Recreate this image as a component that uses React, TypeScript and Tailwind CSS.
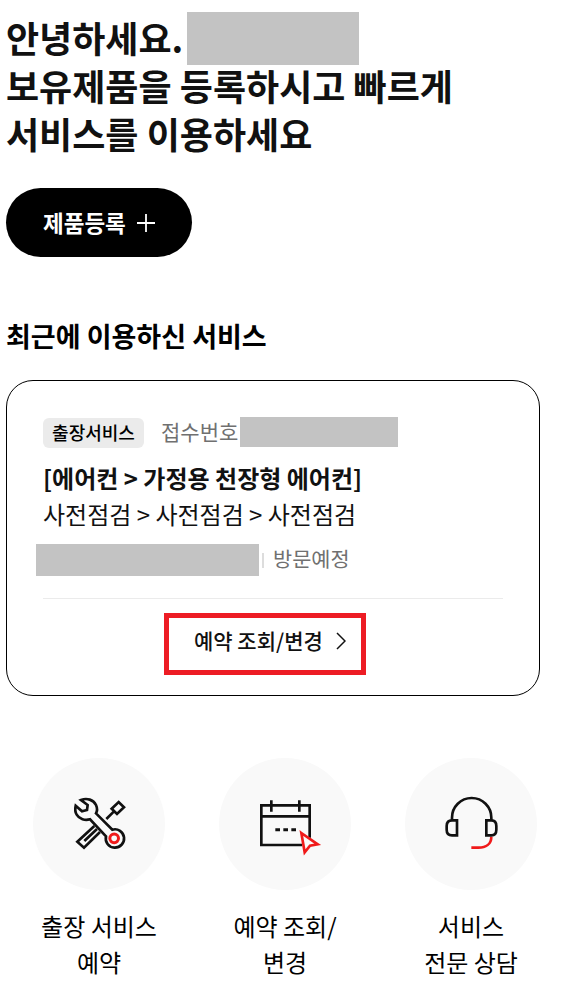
import type { ReactNode } from "react";

function ToolsIcon() {
  return (
    <svg viewBox="24 24 396 396" className="size-full" fill="none" stroke="#111" strokeWidth="8">
      <path d="M168 150 C186 143 205 149 213 165 C217 174 217 183 213 190 L262 239 A27.500 27.500 0 1 1 243 259 L195 208 C180 212 163 208 155 194 C150 186 150 176 152 167 L171 184 L186 180 L188 165 Z" />
      <circle cx="267.500" cy="265" r="13" stroke="#f01a1a" strokeWidth="9" />
      <path d="M208 228 L157 275 L177 293 L225 246 M178 273 L216 237 M244 207 L267 184 M260 176 L281 156 L297 172 L276 192 Z" />
    </svg>
  );
}

function CalendarIcon() {
  return (
    <svg viewBox="27 24 396 396" className="size-full" fill="none" stroke="#111" strokeWidth="8">
      <path d="M299 263 V166 H154 V285 H276 M154 199 H299 M184 151 V185 M268 151 V185" />
      <path d="M196 239 H210 M220 239 H234 M244 239 H258" strokeWidth="9" />
      <path d="M274 249 L323 283 L300 287 L284 307 Z" stroke="#f01a1a" strokeWidth="8" />
    </svg>
  );
}

function HeadsetIcon() {
  return (
    <svg viewBox="30 24 396 396" className="size-full" fill="none" stroke="#111" strokeWidth="8">
      <path d="M289 260 C289 283 272 293 250 293 H229" stroke="#f01a1a" strokeWidth="8" />
      <path d="M171 210 V203 A59 59 0 0 1 289 203 V210" />
      <path d="M186 211 H171 Q155 211 155 228 V239 Q155 256 171 256 H186 Z M274 211 H289 Q304 211 304 228 V239 Q304 256 289 256 H274 Z" />
    </svg>
  );
}

function Shortcut({ icon, lines }: { icon: ReactNode; lines: string[] }) {
  return (
    <a className="flex w-[186px] flex-col items-center">
      <span className="block size-[132px] rounded-full bg-[#f9f9f9]">{icon}</span>
      <span className="mt-[18px] text-center text-[24px] leading-[36px] text-black">
        {lines.map((line) => (
          <span key={line} className="block">{line}</span>
        ))}
      </span>
    </a>
  );
}

export default function App() {
  return (
    <main className="h-[1007px] w-[571px] overflow-hidden bg-white pl-[6px] font-['Noto_Sans_CJK_KR','Noto_Sans_KR',sans-serif] text-[#111]">
      <h1 className="pt-[12px] text-[36px] font-bold leading-[48px]">
        <span className="flex h-[49px] items-start">
          <span className="w-[181px] pt-[1px] whitespace-nowrap">안녕하세요.</span>
          <span className="h-[53px] w-[172px] shrink-0 bg-[#c3c3c3]" />
        </span>
        <span className="block">보유제품을 등록하시고 빠르게</span>
        <span className="block">서비스를 이용하세요</span>
      </h1>

      <button className="mt-[31px] flex h-[69px] w-[186px] items-center rounded-full bg-black pl-[37px] text-[22.5px] font-bold leading-[34px] text-white">
        <span className="pb-[2px]">제품등록</span>
        <svg viewBox="0 0 18 18" className="ml-[11px] size-[18px]" fill="none" stroke="white" strokeWidth="1.800">
          <path d="M9 0 V18 M0 9 H18" />
        </svg>
      </button>

      <h2 className="mt-[59px] text-[27px] font-bold leading-[40px] text-black">최근에 이용하신 서비스</h2>

      <section className="mt-[24px] h-[316px] w-[534px] rounded-[27px] border border-black">
        <div className="flex h-[67px] items-end pl-[36px]">
          <span className="flex h-[30px] w-[101px] items-center justify-center rounded-[6px] bg-[#ebebeb] pb-px text-[18px] font-medium text-black">
            출장서비스
          </span>
          <span className="mb-[2px] ml-[17px] w-[79px] text-[21px] leading-[30px] text-[#707070]">접수번호</span>
          <span className="mb-px h-[30px] w-[158px] bg-[#c3c3c3]" />
        </div>
        <p className="mt-[12px] pl-[36px] text-[24px] font-bold leading-[36px]">[에어컨 &gt; 가정용 천장형 에어컨]</p>
        <p className="pl-[36px] text-[24px] leading-[36px]">사전점검 &gt; 사전점검 &gt; 사전점검</p>
        <div className="mt-[12px] flex h-[32px] items-center pl-[29px]">
          <span className="h-[32px] w-[223px] bg-[#c3c3c3]" />
          <span className="ml-[3px] h-[15px] w-[2px] bg-[#ddd]" />
          <span className="ml-[9px] pb-[4px] text-[20.8px] leading-[28px] text-[#707070]">방문예정</span>
        </div>
        <div className="mx-[36px] mt-[22px] h-px bg-[#ebebeb]" />
        <button className="ml-[157px] mt-[14px] flex h-[62px] w-[202px] items-center border-[5px] border-[#ed1c24] pb-[6px] pl-[25px] text-[21px] font-medium leading-[32px]">
          <span className="pb-[2px]">예약 조회/변경</span>
          <svg viewBox="0 0 10 18" className="ml-[13px] h-[18px] w-[10px]" fill="none" stroke="#111" strokeWidth="1.500">
            <path d="M1 1 L9 9 L1 17" />
          </svg>
        </button>
      </section>

      <nav className="mt-[62px] flex">
        <Shortcut icon={<ToolsIcon />} lines={["출장 서비스", "예약"]} />
        <Shortcut icon={<CalendarIcon />} lines={["예약 조회/", "변경"]} />
        <Shortcut icon={<HeadsetIcon />} lines={["서비스", "전문 상담"]} />
      </nav>
    </main>
  );
}
